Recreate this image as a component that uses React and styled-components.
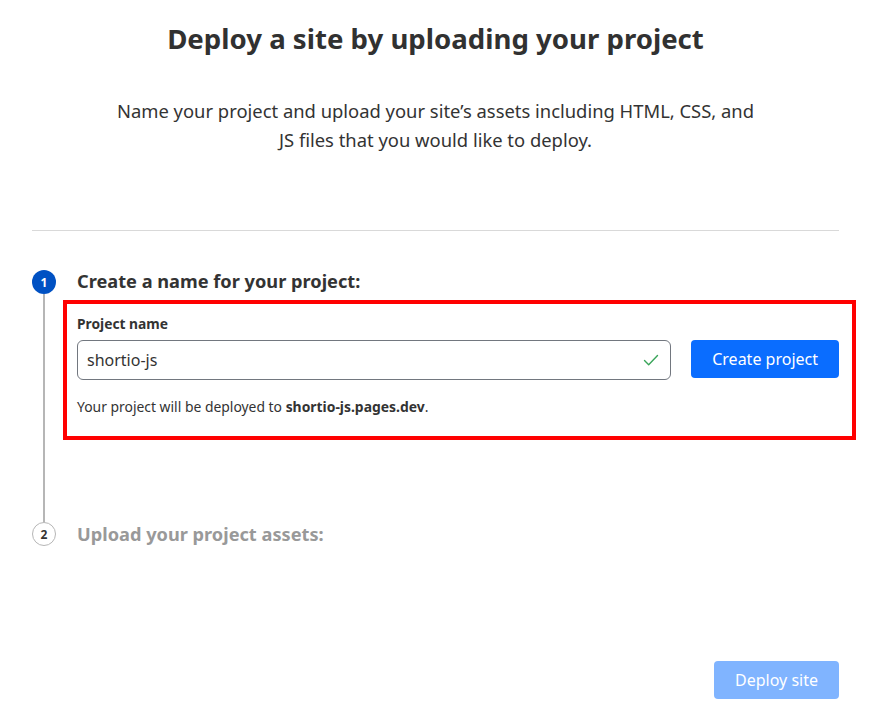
import React, { useState } from "react";
import styled, { createGlobalStyle } from "styled-components";

const GlobalStyle = createGlobalStyle`
  html, body {
    margin: 0;
    padding: 0;
    background: #fff;
  }
  body {
    font-family: "Noto Sans", "Open Sans", sans-serif;
    color: #333;
  }
`;

const Page = styled.div`
  width: 876px;
  box-sizing: border-box;
  padding: 20px 37px 19px 32px;
`;

const Heading = styled.h1`
  margin: 0;
  text-align: center;
  font-size: 27.6px;
  line-height: 36px;
  font-weight: 700;
  color: #313131;
`;

const Intro = styled.p`
  margin: 40px auto 0;
  max-width: 645px;
  text-align: center;
  font-size: 18.4px;
  line-height: 29px;
  color: #333;
`;

const Divider = styled.hr`
  margin: 76px 0 36px;
  border: 0;
  border-top: 1px solid #d9d9d9;
`;

const Step = styled.div`
  display: flex;
  gap: 21px;
`;

const Marker = styled.div`
  width: 24px;
  display: flex;
  flex-direction: column;
  align-items: center;
  padding-top: ${(p) => p.$offset || 0}px;
`;

const Circle = styled.div`
  width: 24px;
  height: 24px;
  box-sizing: border-box;
  border-radius: 50%;
  display: flex;
  align-items: center;
  justify-content: center;
  font-size: 12px;
  font-weight: 700;
  background: ${(p) => (p.$active ? "#0051c3" : "#fff")};
  color: ${(p) => (p.$active ? "#fff" : "#333")};
  border: ${(p) => (p.$active ? "none" : "1px solid #b6b6b6")};
`;

const Line = styled.div`
  flex: 1;
  width: 2px;
  background: #b6b6b6;
`;

const StepBody = styled.div`
  flex: 1;
  padding-bottom: ${(p) => p.$pad || 0}px;
`;

const StepTitle = styled.h2`
  margin: ${(p) => (p.$muted ? "-2px 0 0" : "0")};
  font-size: 18.2px;
  line-height: 28px;
  font-weight: 700;
  color: ${(p) => (p.$muted ? "#999" : "#333")};
`;

const Highlight = styled.div`
  margin: 5px -17px 0 -14px;
  border: 4px solid #ff0000;
  padding: 10px 13px 19px 10px;
`;

const Label = styled.label`
  display: block;
  font-size: 13.8px;
  line-height: 20px;
  font-weight: 700;
  color: #333;
`;

const Row = styled.div`
  display: flex;
  gap: 20px;
  margin-top: 6px;
`;

const InputWrap = styled.div`
  flex: 1;
  position: relative;
`;

const Input = styled.input`
  width: 100%;
  height: 40px;
  box-sizing: border-box;
  border: 1px solid #72777f;
  border-radius: 6px;
  padding: 0 40px 0 9px;
  font-family: inherit;
  font-size: 16px;
  color: #333;
  outline: none;
`;

const Check = styled.svg`
  position: absolute;
  right: 12px;
  top: 12px;
`;

const Button = styled.button`
  height: 38px;
  padding: 0 ${(p) => p.$px || 19}px;
  border: 0;
  border-radius: 4px;
  font-family: inherit;
  font-size: 16px;
  color: #fff;
  background: ${(p) => (p.disabled ? "#80b4ff" : "#0a6dff")};
  cursor: ${(p) => (p.disabled ? "default" : "pointer")};
`;

const Help = styled.p`
  margin: 17px 0 0;
  font-size: 13.9px;
  line-height: 20px;
  color: #333;
`;

const Footer = styled.div`
  display: flex;
  justify-content: flex-end;
  margin-top: 113px;
`;

export default function App() {
  const [name, setName] = useState("shortio-js");

  return (
    <Page>
      <GlobalStyle />
      <Heading>Deploy a site by uploading your project</Heading>
      <Intro>
        Name your project and upload your site’s assets including HTML, CSS, and
        JS files that you would like to deploy.
      </Intro>
      <Divider />

      <Step>
        <Marker $offset={3}>
          <Circle $active>1</Circle>
          <Line />
        </Marker>
        <StepBody $pad={82}>
          <StepTitle>Create a name for your project:</StepTitle>
          <Highlight>
            <Label htmlFor="project-name">Project name</Label>
            <Row>
              <InputWrap>
                <Input
                  id="project-name"
                  value={name}
                  onChange={(e) => setName(e.target.value)}
                />
                <Check width="16" height="16" viewBox="0 0 16 16" fill="none">
                  <path
                    d="M1.5 8.5l4.2 4.2L14.5 3.5"
                    stroke="#3aa55a"
                    strokeWidth="1.4"
                    strokeLinecap="round"
                    strokeLinejoin="round"
                  />
                </Check>
              </InputWrap>
              <Button $px={21}>Create project</Button>
            </Row>
            <Help>
              Your project will be deployed to <b>{name}.pages.dev</b>.
            </Help>
          </Highlight>
        </StepBody>
      </Step>

      <Step>
        <Marker $offset={0}>
          <Circle>2</Circle>
        </Marker>
        <StepBody>
          <StepTitle $muted>Upload your project assets:</StepTitle>
        </StepBody>
      </Step>

      <Footer>
        <Button disabled $px={21}>
          Deploy site
        </Button>
      </Footer>
    </Page>
  );
}
